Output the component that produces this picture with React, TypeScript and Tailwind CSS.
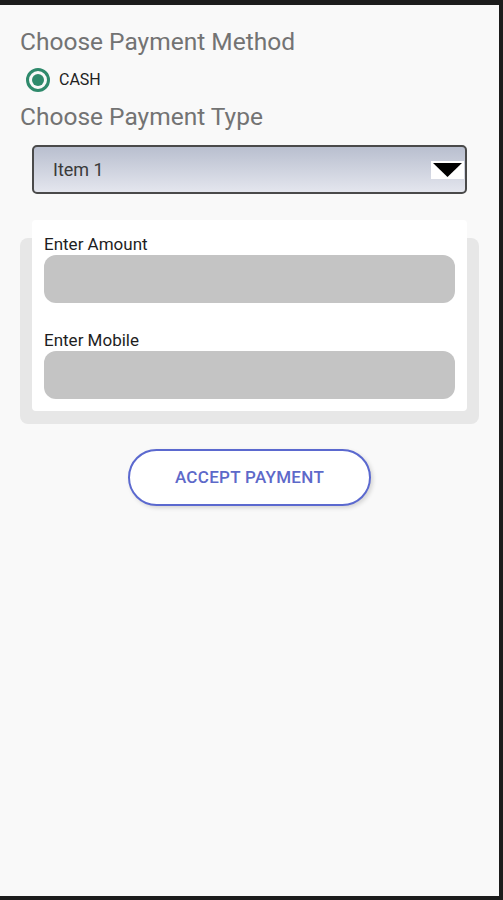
import React from "react";

export default function App() {
  return (
    <div
      className="w-[503px] h-[900px] bg-[#1c1c1c] pt-[5px] pr-[4px] pb-[4px] box-border"
      style={{ fontFamily: "Roboto, 'Liberation Sans', sans-serif" }}
    >
      <div className="w-full h-full bg-[#f9f9f9] flex flex-col">
        <div className="pl-[20px] pt-[23px]">
          <div className="text-[24.5px] leading-[28px] text-[#737373]">Choose Payment Method</div>
          <div className="flex items-center mt-[12px] ml-[6px] h-[24px]">
            <div className="w-[24px] h-[24px] rounded-full border-[3px] border-[#2f8a6c] flex items-center justify-center">
              <div className="w-[12px] h-[12px] rounded-full bg-[#2f8a6c]" />
            </div>
            <span className="ml-[9px] text-[16px] text-[#222]">CASH</span>
          </div>
          <div className="text-[24.5px] leading-[28px] text-[#737373] mt-[11px]">Choose Payment Type</div>
        </div>

        <div className="mx-[32px] mt-[14px] h-[49px] rounded-[5px] border-2 border-[#4a4a4a] bg-gradient-to-b from-[#b9bfcf] to-[#e4e6ee] flex items-center justify-between pl-[19px] pr-[1px]">
          <span className="text-[18px] text-[#3a3a3a]">Item 1</span>
          <div className="w-[33px] h-[18px] bg-white flex items-center justify-center">
            <svg width="29" height="14" viewBox="0 0 29 14">
              <polygon points="0,0 29,0 14.5,14" fill="#000" />
            </svg>
          </div>
        </div>

        <div className="relative mx-[20px] mt-[26px] h-[204px]">
          <div className="absolute left-0 right-0 top-[18px] bottom-0 rounded-[8px] bg-[#e7e7e7]" />
          <div className="relative mx-[12px] h-[191px] bg-white rounded-[4px] px-[12px] pt-[13px]">
            <div className="text-[17px] leading-[22px] text-[#1e1e1e]">Enter Amount</div>
            <div className="h-[48px] rounded-[12px] bg-[#c4c4c4]" />
            <div className="text-[17px] leading-[22px] text-[#1e1e1e] mt-[26px]">Enter Mobile</div>
            <div className="h-[48px] rounded-[12px] bg-[#c4c4c4]" />
          </div>
        </div>

        <div className="flex justify-center mt-[25px]">
          <button className="w-[243px] h-[57px] rounded-full border-2 border-[#5b69cf] bg-white shadow-[2px_2px_4px_rgba(0,0,0,0.15)] text-[17px] font-medium tracking-[0.3px] text-[#5d69c9]">
            ACCEPT PAYMENT
          </button>
        </div>
      </div>
    </div>
  );
}
